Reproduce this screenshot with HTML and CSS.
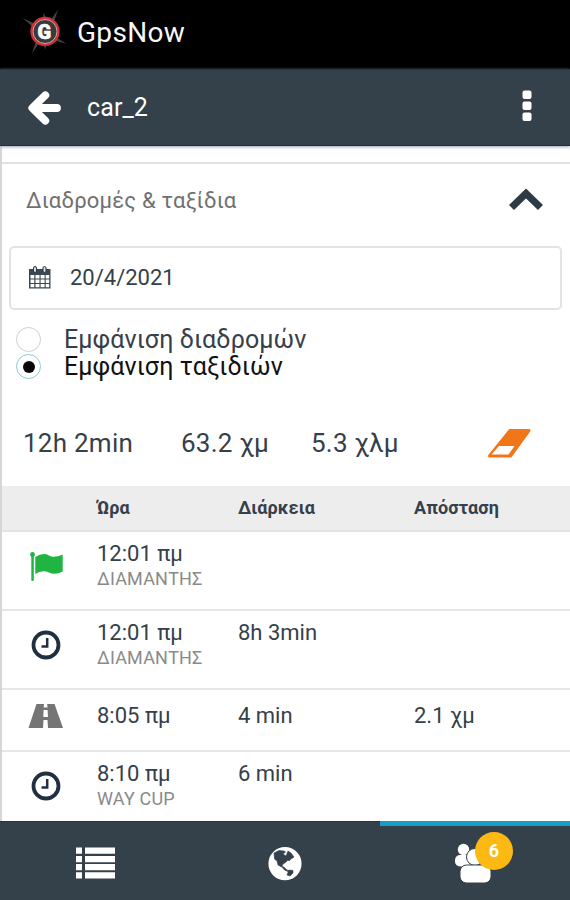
FILE: index.html
```html
<!DOCTYPE html>
<html lang="el">
<head>
<meta charset="utf-8">
<title>GpsNow</title>
<link rel="stylesheet" href="styles.css">
</head>
<body>
<div class="app">
  <header class="brand">
    <svg class="logo" width="46" height="46" viewBox="22 8 46 46">
      <path d="M22.500 18L35 24L33 27ZM58 9.500L51 20L54 22ZM66.500 44L56 37L54 40ZM32 53.500L36 41L39 43ZM44 13L43 18H46ZM45 50L44 44H46.500Z" fill="#454344"/>
      <circle cx="45" cy="31.500" r="13.500" fill="#3c393b" stroke="#d92e37" stroke-width="2.300"/>
      <circle cx="45" cy="31.500" r="12" fill="none" stroke="#d9b9bb" stroke-width=".9"/>
      <text x="44.300" y="38.500" text-anchor="middle" class="logo-letter">G</text>
    </svg>
    <span class="brand-name">GpsNow</span>
  </header>
  <div class="toolbar">
    <svg width="34" height="36" viewBox="28 90 34 36">
      <path d="M45.300 95.300L32.300 108L45.300 120.700M34 108H57" fill="none" stroke="#fff" stroke-width="7.800" stroke-linecap="round" stroke-linejoin="round"/>
    </svg>
    <span class="device">car_2</span>
    <svg class="more" width="10" height="34" viewBox="522 89 10 34" fill="#fff">
      <rect x="522.500" y="90.500" width="9" height="8.500" rx="2"/><rect x="522.500" y="101.500" width="9" height="8.500" rx="2"/><rect x="522.500" y="112.500" width="9" height="8.500" rx="2"/>
    </svg>
  </div>
  <main class="content">
    <section class="section-head">
      <h1 class="section-title">Διαδρομές &amp; ταξίδια</h1>
      <svg class="chevron" width="36" height="24" viewBox="508 187 36 24">
        <path d="M511.500 206.500L526 192.500L540.500 206.500" fill="none" stroke="#2d3b46" stroke-width="7.200"/>
      </svg>
    </section>
    <div class="date-field">
      <svg width="24" height="26" viewBox="28 265 24 26">
        <path d="M29 269H50.500V288.500H29Z" fill="#3b4852"/>
        <path d="M30.500 275h3.800v3.500h-3.800zM35.500 275h4v3.500h-4zM40.600 275h4v3.500h-4zM45.700 275h3.500v3.500h-3.500zM30.500 279.500h3.800v3.500h-3.800zM35.500 279.500h4v3.500h-4zM40.600 279.500h4v3.500h-4zM45.700 279.500h3.500v3.500h-3.500zM30.500 284h3.800v3.200h-3.800zM35.500 284h4v3.200h-4zM40.600 284h4v3.200h-4zM45.700 284h3.500v3.200h-3.500z" fill="#fff"/>
        <rect x="33.500" y="266.500" width="3" height="6" rx="1.500" fill="#d8dde0" stroke="#273540"/><rect x="43" y="266.500" width="3" height="6" rx="1.500" fill="#d8dde0" stroke="#273540"/>
      </svg>
      <span class="date">20/4/2021</span>
    </div>
    <div class="options">
      <div class="option"><i class="radio"></i><span class="option-routes">Εμφάνιση διαδρομών</span></div>
      <div class="option selected"><i class="radio"></i><span class="option-trips">Εμφάνιση ταξιδιών</span></div>
    </div>
    <div class="stats">
      <span class="stat-time">12h 2min</span><span class="stat-distance">63.2 χμ</span><span class="stat-speed">5.3 χλμ</span>
      <svg width="44" height="32" viewBox="487 427 44 32">
        <path d="M510 430.500H529L510.500 456H489.500Z" fill="#f17519" stroke="#f17519" stroke-width="3" stroke-linejoin="round"/>
        <path d="M499 446H514.500L508.500 454.500H491.500Z" fill="#fff"/>
      </svg>
    </div>
    <div class="row table-head"><span></span><span class="h-time">Ώρα</span><span class="h-duration">Διάρκεια</span><span class="h-distance">Απόσταση</span></div>
    <div class="row entry">
      <svg width="36" height="34" viewBox="28 549 36 34" fill="#20b543">
        <circle cx="32.500" cy="554.500" r="2.400"/><rect x="31.300" y="555" width="2.500" height="26" rx="1"/>
        <path d="M35.300 557Q43 552 49 555.500Q54 558.500 62.700 554.500V571.500Q55 575.500 49 572.500Q42 569.500 35.300 574Z"/>
      </svg>
      <div><div class="time">12:01 πμ</div><div class="place">ΔΙΑΜΑΝΤΗΣ</div></div><span></span><span></span>
    </div>
    <div class="row entry">
      <svg class="clock" width="30" height="30" viewBox="0 0 30 30"><circle cx="15" cy="15" r="12.500"/><path d="M16.200 8V16.500H10.500"/></svg>
      <div><div class="time">12:01 πμ</div><div class="place">ΔΙΑΜΑΝΤΗΣ</div></div><span class="long-duration">8h 3min</span><span></span>
    </div>
    <div class="row entry trip">
      <svg width="36" height="26" viewBox="28 702 36 26">
        <path d="M36.500 704H44L43.700 707.500H47.500L47.200 704H54.500L63 728H48L47.500 720H43.500L43 728H28.500ZM43.600 710L43.300 717H48L47.600 710Z" fill="#757575" fill-rule="evenodd"/>
      </svg>
      <div class="time">8:05 πμ</div><span>4 min</span><span>2.1 χμ</span>
    </div>
    <div class="row entry last">
      <svg class="clock" width="30" height="30" viewBox="0 0 30 30"><circle cx="15" cy="15" r="12.500"/><path d="M16.200 8V16.500H10.500"/></svg>
      <div><div class="time">8:10 πμ</div><div class="place way">WAY CUP</div></div><span>6 min</span><span></span>
    </div>
  </main>
  <nav class="tabs">
    <div class="tab">
      <svg width="40" height="34" viewBox="75 846 40 34" fill="#fff"><path d="M76 846.500h6v6.300h-6zM85 846.500h30v6.300H85zM76 855h6v6.300h-6zM85 855h30v6.300H85zM76 863h6v6.300h-6zM85 863h30v6.300H85zM76 871.200h6v6.300h-6zM85 871.200h30v6.300H85z"/></svg>
    </div>
    <div class="tab">
      <svg width="34" height="34" viewBox="269 847 34 34"><circle cx="286" cy="863.700" r="16.600" fill="#fff"/>
        <path d="M275 853L280 850.500L285 851L286.500 852L284 854L287 856L289 851L292 853L295 857L292 859L290 861L289 860L286.500 862.500L284 864L283 866L286 868L288 870L291 871L290 872L285.500 870L283.500 867.500L279 865L278 861L275.500 859ZM290 870L294 870.500L294 873L291 876L288 875Z" fill="#34414a" stroke="#34414a" stroke-width=".6" stroke-linejoin="round"/></svg>
    </div>
    <div class="tab active">
      <div class="people">
        <svg width="42" height="42" viewBox="453 842 42 42" fill="#fff">
          <circle cx="463.500" cy="849.500" r="5.700"/><rect x="455" y="855" width="17" height="11.500" rx="5"/>
          <circle cx="475" cy="857" r="8.500" stroke="#34414a"/>
          <rect x="460" y="865" width="31" height="18" rx="6.500" stroke="#34414a"/>
        </svg>
        <span class="badge">6</span>
      </div>
    </div>
  </nav>
</div>
</body>
</html>
```
FILE: styles.css
```css
* { box-sizing: border-box; }
body { margin: 0; background: #fff; font-family: Roboto, "Noto Sans", sans-serif; color: #35404a; }
svg { display: block; flex: none; }
.app { display: flex; flex-direction: column; width: 570px; height: 900px; overflow: hidden; }
.brand { display: flex; flex: none; height: 69px; padding: 8px 0 0 22px; background: #000; }
.logo-letter { font: 900 20px Roboto, sans-serif; fill: #fff; stroke: #fff; stroke-width: .6px; }
.brand-name { margin-left: 9px; color: #f7f7f7; font-size: 28px; line-height: 50px; letter-spacing: .3px; }
.toolbar { display: flex; flex: none; align-items: center; height: 77px; padding: 0 38px 0 28px; background: #34414a; border-top: 1px solid #293741; border-bottom: 1px solid #202e38; box-shadow: 0 1px 3px #9da5b1; z-index: 1; }
.device { margin-left: 25px; color: #fff; font-size: 25px; letter-spacing: .1px; }
.more { margin: -4px 0 0 auto; }
.content { flex: 1; min-height: 0; overflow: hidden; padding-top: 16px; border-left: 2px solid #d6d6d8; }
.section-head { display: flex; justify-content: space-between; height: 84px; padding: 24px 26px 0 24px; border-top: 2px solid #e2e2e4; }
.section-title { margin: 0; color: #707070; font-size: 22px; font-weight: 400; line-height: 26px; letter-spacing: .2px; }
.date-field { display: flex; align-items: center; width: 553px; height: 64px; margin-left: 7px; padding-left: 17px; border: 2px solid #e3e3e4; border-radius: 5px; }
.date { margin: -1px 0 0 18px; font-size: 22px; }
.options { padding: 16px 0 0 14px; }
.option { display: flex; align-items: center; height: 27px; font-size: 25px; letter-spacing: .12px; white-space: nowrap; }
.radio { display: flex; flex: none; width: 25px; height: 25px; margin-right: 23px; border: 1px solid #cfcfcf; border-radius: 50%; }
.selected { color: #111; }
.selected .radio { border-color: #8ec9d6; align-items: center; justify-content: center; }
.selected .radio::after { content: ""; width: 12px; height: 12px; border-radius: 50%; background: #080808; }
.stats { display: grid; grid-template-columns: 158px 130px 176px 44px; height: 106px; padding: 20px 0 0 21px; align-items: center; font-size: 26px; letter-spacing: .25px; }
.row { display: grid; grid-template-columns: 69px 141px 176px auto; padding-left: 26px; font-size: 22px; }
.table-head { height: 46px; background: #ededee; border-bottom: 2px solid #e3e3e4; font-size: 18px; font-weight: 700; line-height: 43px; letter-spacing: .1px; }
.entry { height: 79px; padding-top: 8px; border-bottom: 2px solid #e6e6e7; line-height: 28px; }
.entry > svg { margin-top: 9px; }
.place { color: #8a8a8a; font-size: 18px; line-height: 22px; letter-spacing: .2px; }
.entry > .clock { margin: 11px 0 0 3px; }
.clock { fill: none; stroke: #203040; stroke-width: 3.800; }
.clock path { stroke-width: 2.500px; }
.entry.trip { height: 62px; padding-top: 12px; }
.trip > svg { margin-top: 0; }
.entry.last { height: 70px; border: 0; }
.tabs { display: grid; grid-template-columns: repeat(3, 190px); flex: none; height: 79px; background: #34414a; }
.tab { display: flex; justify-content: center; padding-top: 25px; border-top: 1px solid #263640; }
.active { padding: 16px 0 0 2px; border-top: 5px solid #179ec7; }
.people { position: relative; margin-right: 4px; }
.badge { position: absolute; left: 22px; top: -10px; width: 38px; height: 38px; border-radius: 50%; background: #fdb913; color: #fff; font-size: 18px; font-weight: 700; line-height: 38px; text-align: center; }
```
